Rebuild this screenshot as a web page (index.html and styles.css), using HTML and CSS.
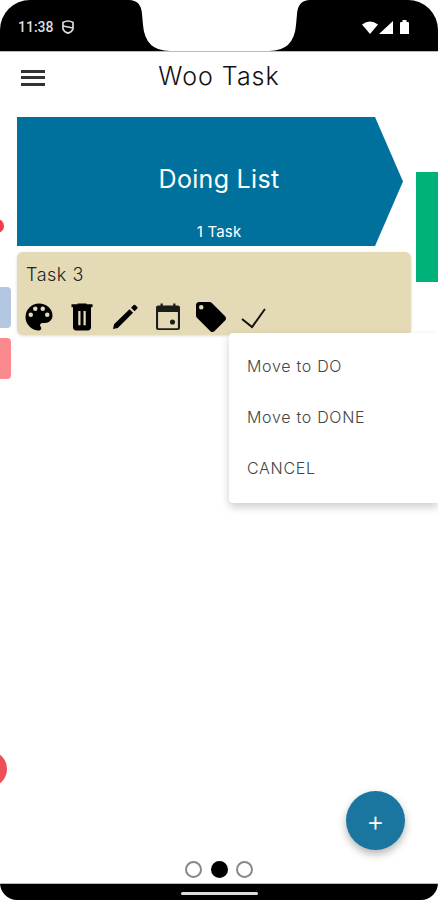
FILE: index.html
```html
<!DOCTYPE html>
<html lang="en">
<head>
    <meta charset="UTF-8">
    <meta name="viewport" content="width=device-width, initial-scale=1.0">
    <title>Woo Task</title>
    <link rel="stylesheet" href="styles.css">
</head>
<body>
    <div class="phone">
        <div class="status-bar">
            <div class="status-left">
                <span class="clock">11:38</span>
                <svg class="shield" width="12" height="14" viewBox="0 0 12 14">
                    <path d="M1 2.500 Q6 -0.500 11 2.500 V9 Q9.500 12.500 6 13.200 Q2.500 12.500 1 9 Z M1 6 L11 8" fill="none" stroke="#ddd" stroke-width="1.700"/>
                </svg>
            </div>
            <svg class="notch" width="191" height="52" viewBox="0 0 191 52">
                <path d="M5 0 H186 Q174 0 173 14 L172 25 Q170 51 145 51 H46 Q21 51 19 25 L18 14 Q17 0 5 0 Z" fill="#fff"/>
            </svg>
            <div class="status-right">
                <svg width="16" height="13" viewBox="0 0 16 13"><path d="M0 3.500 Q8 -2.500 16 3.500 L8 13 Z" fill="#fff"/></svg>
                <svg width="14" height="13" viewBox="0 0 14 13"><path d="M14 0 V13 H0 Z" fill="#fff"/></svg>
                <svg class="battery" width="9" height="14" viewBox="0 0 9 14"><path d="M0 3 Q0 2 1 2 H2.500 V0 H6.500 V2 H8 Q9 2 9 3 V14 H0 Z" fill="#fff"/></svg>
            </div>
        </div>

        <header class="app-bar">
            <button class="menu-btn" aria-label="Menu"><span></span><span></span><span></span></button>
            <h1 class="app-title">Woo Task</h1>
        </header>

        <main class="board">
            <div class="list-head">
                <h2 class="list-name">Doing List</h2>
                <p class="list-count">1 Task</p>
            </div>

            <div class="task-card">
                <p class="task-name">Task 3</p>
                <div class="task-actions">
                    <svg class="icon" viewBox="0 0 24 24"><path d="M12 3a9 9 0 0 0 0 18c.83 0 1.500-.67 1.500-1.500 0-.39-.15-.74-.39-1.010-.23-.26-.38-.61-.38-.99 0-.83.67-1.500 1.500-1.500H16c2.760 0 5-2.240 5-5 0-4.420-4.030-8-9-8zm-5.500 9a1.500 1.500 0 1 1 0-3 1.500 1.500 0 0 1 0 3zm3-4a1.500 1.500 0 1 1 0-3 1.500 1.500 0 0 1 0 3zm5 0a1.500 1.500 0 1 1 0-3 1.500 1.500 0 0 1 0 3zm3 4a1.500 1.500 0 1 1 0-3 1.500 1.500 0 0 1 0 3z"/></svg>
                    <svg class="icon" viewBox="0 0 24 24"><path fill-rule="evenodd" d="M15 3.500V3H9v.5H5v2h1V19c0 1.100.9 2 2 2h8c1.100 0 2-.9 2-2V5.500h1v-2h-4zM9.500 8h1.500v9.500H9.500V8zM13 8h1.500v9.500H13V8z"/></svg>
                    <svg class="icon" viewBox="0 0 24 24"><path d="M4 20 L4.700 16.800 L15 6.800 L17.400 9.200 L7.200 19.300 Z M16 5.800 L17.800 4 Q18.300 3.600 18.800 4 L20.200 5.400 Q20.600 5.900 20.200 6.400 L18.400 8.200 Z"/></svg>
                    <svg class="icon cal" viewBox="0 0 24 24"><path fill-rule="evenodd" d="M7 3h1.500v1.300h7V3H17v1.300h1.500c.9 0 1.500.6 1.500 1.500v13.400c0 .9-.6 1.500-1.500 1.500h-13c-.9 0-1.500-.6-1.500-1.500V5.800c0-.9.6-1.500 1.500-1.500H7V3zM5.400 8.600v10.400c0 .3.2.5.5.5h12.200c.3 0 .5-.2.500-.5V8.600H5.400z"/><circle cx="15" cy="15.300" r="1.700"/></svg>
                    <svg class="icon" viewBox="0 0 24 24"><path d="M21.410 11.580l-9-9C12.050 2.220 11.550 2 11 2H4c-1.100 0-2 .9-2 2v7c0 .55.22 1.050.59 1.420l9 9c.36.36.86.58 1.410.58.55 0 1.050-.22 1.410-.59l7-7c.37-.36.59-.86.59-1.410 0-.55-.23-1.060-.59-1.420zM5.500 7a1.500 1.500 0 1 1 0-3 1.500 1.500 0 0 1 0 3z"/></svg>
                    <svg class="icon" viewBox="0 0 24 24"><path d="M4 13.300 L10.700 18.700 L19.300 6.700" fill="none" stroke="#111" stroke-width="1.300"/></svg>
                </div>
            </div>

            <div class="menu">
                <div class="menu-item">Move to DO</div>
                <div class="menu-item">Move to DONE</div>
                <div class="menu-item">CANCEL</div>
            </div>

            <!-- bits of the next and previous pages showing at the edges -->
            <div class="peek peek-green"></div>
            <div class="peek peek-dot"></div>
            <div class="peek peek-blue"></div>
            <div class="peek peek-red"></div>
            <div class="peek peek-circle"></div>

            <button class="fab" aria-label="Add">+</button>
        </main>

        <div class="pager">
            <span class="pager-dot"></span>
            <span class="pager-dot active"></span>
            <span class="pager-dot"></span>
        </div>

        <div class="nav-bar"><div class="nav-handle"></div></div>
    </div>
</body>
</html>
```

FILE: styles.css
```css
* {
    margin: 0;
    padding: 0;
    box-sizing: border-box;
}

body {
    font-family: 'Inter', 'Liberation Sans', sans-serif;
    background: #fff;
    color: #222;
    overflow: hidden;
}

.phone {
    width: 438px;
    height: 900px;
    display: flex;
    flex-direction: column;
    overflow: hidden;
}

.status-bar {
    position: relative;
    height: 52px;
    flex-shrink: 0;
    background: #000;
    border-radius: 30px 30px 0 0;
    border-bottom: 1px solid #bbb;
    display: flex;
    align-items: center;
    justify-content: space-between;
    padding: 3px 29px 0 18px;
}

.status-left {
    display: flex;
    align-items: center;
    gap: 8px;
}

.clock {
    font-family: 'Roboto', sans-serif;
    font-size: 14px;
    font-weight: 500;
    color: #ddd;
}

.status-right {
    display: flex;
    align-items: center;
    gap: 1px;
}

.battery {
    margin-left: 6px;
}

.notch {
    position: absolute;
    top: 0;
    left: 124px;
}

.app-bar {
    height: 65px;
    flex-shrink: 0;
    display: flex;
    align-items: center;
    position: relative;
    padding: 0 0 14px 21px;
}

.menu-btn {
    width: 24px;
    display: flex;
    flex-direction: column;
    gap: 3.500px;
    background: none;
    border: none;
}

.menu-btn span {
    height: 3px;
    background: #333;
}

.app-title {
    position: absolute;
    left: 0;
    right: 0;
    top: 9px;
    text-align: center;
    font-size: 25px;
    font-weight: 300;
    letter-spacing: 1px;
    color: #111;
}

.board {
    position: relative;
    flex: 1;
    padding: 0 0 0 17px;
}

.list-head {
    width: 386px;
    height: 129px;
    background: #00719c;
    clip-path: polygon(0 0, 358px 0, 100% 50%, 358px 100%, 0 100%);
    color: #fff;
    text-align: center;
    padding: 44px 0 0 18px;
}

.list-name {
    font-size: 25px;
    font-weight: 400;
    line-height: 36px;
    letter-spacing: 0.3px;
}

.list-count {
    font-size: 15px;
    font-weight: 400;
    letter-spacing: 0.2px;
    margin-top: 25px;
}

.task-card {
    width: 394px;
    height: 83px;
    margin-top: 6px;
    background: #e4dab6;
    border-radius: 6px;
    box-shadow: 0 1px 3px rgba(0, 0, 0, 0.15);
    padding: 12px 4px 0 4px;
}

.task-name {
    margin-left: 5px;
    font-size: 18px;
    line-height: 22px;
    font-weight: 300;
    letter-spacing: 0.5px;
    color: #222;
}

.task-actions {
    display: flex;
    gap: 7px;
    margin-top: 13px;
}

.icon {
    width: 36px;
    height: 36px;
    fill: #000;
}

.icon.cal {
    fill: #1c1c1c;
}

.menu {
    position: absolute;
    top: 216px;
    left: 229px;
    width: 209px;
    height: 170px;
    background: #fff;
    border-radius: 4px 0 0 4px;
    box-shadow: 0 4px 8px rgba(0, 0, 0, 0.2);
    padding: 7px 18px;
}

.menu-item {
    height: 51px;
    display: flex;
    align-items: center;
    font-size: 16px;
    font-weight: 300;
    letter-spacing: 0.7px;
    color: #444;
}

.peek {
    position: absolute;
}

.peek-green {
    top: 55px;
    left: 416px;
    width: 22px;
    height: 110px;
    background: #00b27a;
}

.peek-dot {
    top: 102px;
    left: -10px;
    width: 14px;
    height: 14px;
    border-radius: 50%;
    background: #f33e4a;
}

.peek-blue {
    top: 170px;
    left: -6px;
    width: 17px;
    height: 41px;
    background: #b3c8e0;
    border-radius: 4px;
}

.peek-red {
    top: 221px;
    left: -6px;
    width: 17px;
    height: 41px;
    background: #fb8a8e;
    border-radius: 4px;
}

.peek-circle {
    top: 634px;
    left: -29px;
    width: 36px;
    height: 36px;
    border-radius: 50%;
    background: #ef5055;
}

.fab {
    position: absolute;
    top: 674px;
    left: 346px;
    width: 59px;
    height: 59px;
    border: none;
    border-radius: 50%;
    background: #1b769f;
    color: #fff;
    font-family: 'Inter', sans-serif;
    font-size: 28px;
    font-weight: 300;
    line-height: 56px;
    box-shadow: 0 4px 8px rgba(0, 0, 0, 0.3);
}

.pager {
    height: 23px;
    flex-shrink: 0;
    display: flex;
    justify-content: center;
    gap: 8.500px;
    padding-top: 1px;
}

.pager-dot {
    width: 17px;
    height: 17px;
    border-radius: 50%;
    border: 2px solid #888;
    background: #fff;
}

.pager-dot.active {
    background: #000;
    border-color: #000;
}

.nav-bar {
    height: 17px;
    flex-shrink: 0;
    background: #000;
    border-top: 1px solid #bbb;
    border-radius: 0 0 18px 18px;
    display: flex;
    justify-content: center;
    padding-top: 8px;
}

.nav-handle {
    width: 77px;
    height: 3px;
    border-radius: 2px;
    background: #ddd;
}
```
